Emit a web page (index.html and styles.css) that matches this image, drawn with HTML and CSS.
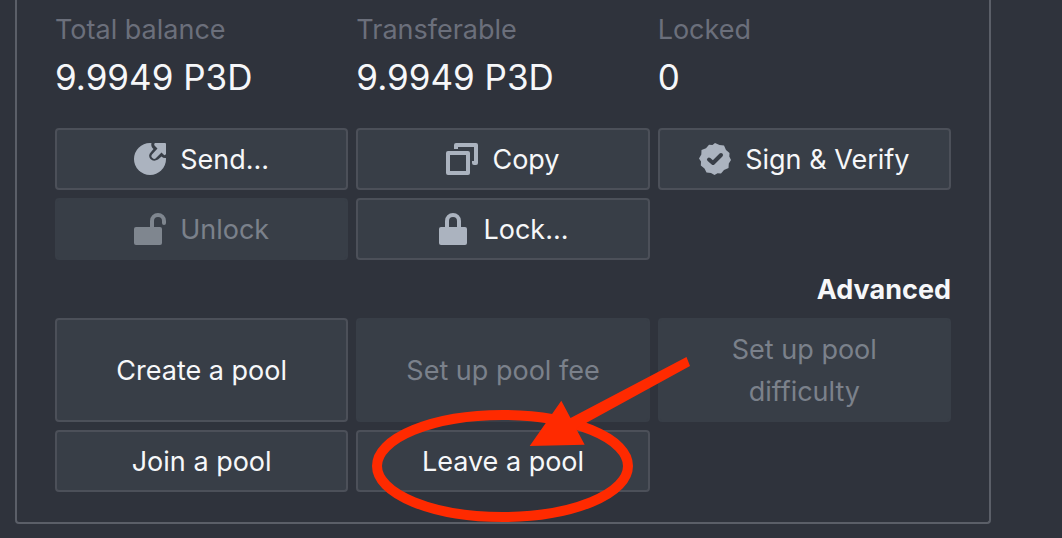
FILE: index.html
```html
<!DOCTYPE html>
<html lang="en">
<head>
<meta charset="utf-8">
<title>Account</title>
<link rel="stylesheet" href="styles.css">
</head>
<body>
<main class="card">
  <dl class="balances">
    <div class="balance"><dt class="label">Total balance</dt><dd class="value">9.9949 P3D</dd></div>
    <div class="balance"><dt class="label">Transferable</dt><dd class="value">9.9949 P3D</dd></div>
    <div class="balance"><dt class="label">Locked</dt><dd class="value">0</dd></div>
  </dl>
  <div class="grid">
    <button class="button" type="button">
      <svg class="icon" viewBox="0 0 32 32" aria-hidden="true"><circle cx="16" cy="16" r="16"/><path class="cut" d="M17.500 0H32V15Q29.500 15.500 27.500 13.500L24 16.500Q19.500 19 16.500 16Q13.500 12.500 17 9L19.500 6Q16.500 3.500 17.500 0Z"/><path d="M21 0H31Q32 0 32 1V11Q31 13 29.500 11.500L27.500 9.500L21.500 15.500Q20 16.500 18.500 15Q16.500 13.500 18 11.500L23.500 5.500L20.500 2.500Q19.500 .5 21 0Z"/></svg>
      <span>Send...</span>
    </button>
    <button class="button" type="button">
      <svg class="icon" viewBox="0 0 32 32" aria-hidden="true"><path fill-rule="evenodd" d="M2 8H22Q24 8 24 10V30Q24 32 22 32H2Q0 32 0 30V10Q0 8 2 8ZM4 12V28H20V12Z"/><path d="M10 0H30Q32 0 32 2V20Q32 22 30 22H28Q26 22 26 20V18H28V4H12V6H8V2Q8 0 10 0Z"/></svg>
      <span>Copy</span>
    </button>
    <button class="button" type="button">
      <svg class="icon" viewBox="0 0 32 32" aria-hidden="true"><path d="M16 0L20.500 2L25 2.500L27 7L30.500 10L30.300 13.500L32 17L29.800 20.500L29.500 25L25 27L22 30.500L18.500 30.300L15.500 32L12 30L7.500 29.500L5.500 25.500L1.800 22.500L2 18.500L0 15.500L2.300 11.500L2.500 7L7 5.200L10 1.800L13.500 2Z"/><path class="check" d="M10 16.500L14 20L22 12"/></svg>
      <span>Sign &amp; Verify</span>
    </button>
    <button class="button" type="button" disabled>
      <svg class="icon" viewBox="0 0 32 32" aria-hidden="true"><rect y="14" width="28" height="18" rx="2"/><path class="shackle" d="M18 15V8A6 6 0 0 1 30 8V10"/></svg>
      <span>Unlock</span>
    </button>
    <button class="button" type="button">
      <svg class="icon" viewBox="0 0 32 32" aria-hidden="true"><rect x="2" y="14" width="28" height="18" rx="2"/><path class="shackle" d="M10 15V8A6 6 0 0 1 22 8V15"/></svg>
      <span>Lock...</span>
    </button>
  </div>
  <h2 class="heading">Advanced</h2>
  <div class="grid">
    <button class="button" type="button">Create a pool</button>
    <button class="button" type="button" disabled>Set up pool fee</button>
    <button class="button" type="button" disabled>Set up pool difficulty</button>
    <button class="button" type="button">Join a pool</button>
    <div class="marked">
      <button class="button" type="button">Leave a pool</button>
      <svg class="annotation" viewBox="0 0 322 170" aria-hidden="true"><ellipse cx="132.500" cy="111" rx="125.500" ry="51"/><path d="M316.500 2L200.500 63L191.300 45.700L159.700 91L214.700 89.700L206 73.500L320 11Z"/></svg>
    </div>
  </div>
</main>
</body>
</html>
```
FILE: styles.css
```css
* {
  box-sizing: border-box;
}

body {
  margin: 0;
  background: #2f333c;
  color: #f6f7f9;
  font-family: Inter, "Liberation Sans", sans-serif;
  font-size: 27px;
  line-height: 42px;
}

.card {
  margin: 0 71px 14px 15px;
  padding: 9px 38px 30px;
  border: 2px solid #5b5f68;
  border-top: 0;
  border-radius: 0 0 4px 4px;
}

.balances,
.grid {
  display: grid;
  grid-template-columns: repeat(3, minmax(0, 1fr));
  gap: 8px;
}

.balances {
  margin: 0 0 25px;
}

.label {
  color: #6b6f7b;
}

.value {
  margin: 0;
  font-size: 35px;
  line-height: 52px;
}

.button {
  display: flex;
  align-items: center;
  justify-content: center;
  gap: 14px;
  width: 100%;
  min-height: 62px;
  padding: 9px 20px 7px;
  border: 2px solid #4c5059;
  border-radius: 4px;
  background: #383e47;
  color: inherit;
  font: inherit;
}

.button:disabled {
  border-color: #383e47;
  color: #7b818b;
}

.icon {
  flex: none;
  width: 32px;
  height: 32px;
  margin-bottom: 2px;
  fill: #abb3bf;
}

.button:disabled .icon {
  fill: #7f868f;
}

.icon .cut {
  fill: #383e47;
}

.icon .check {
  fill: none;
  stroke: #383e47;
  stroke-width: 4;
  stroke-linecap: round;
  stroke-linejoin: round;
}

.icon .shackle {
  fill: none;
  stroke: #abb3bf;
  stroke-width: 4;
  stroke-linecap: round;
}

.button:disabled .shackle {
  stroke: #7f868f;
}

.heading {
  margin: 9px 0 7px;
  font-size: 27px;
  font-weight: 700;
  line-height: 42px;
  text-align: right;
}

.marked {
  position: relative;
}

.annotation {
  position: absolute;
  top: -75px;
  left: 14px;
  width: 322px;
  height: 170px;
  fill: #ff2a00;
  pointer-events: none;
}

.annotation ellipse {
  fill: none;
  stroke: #ff2a00;
  stroke-width: 10;
}
```
